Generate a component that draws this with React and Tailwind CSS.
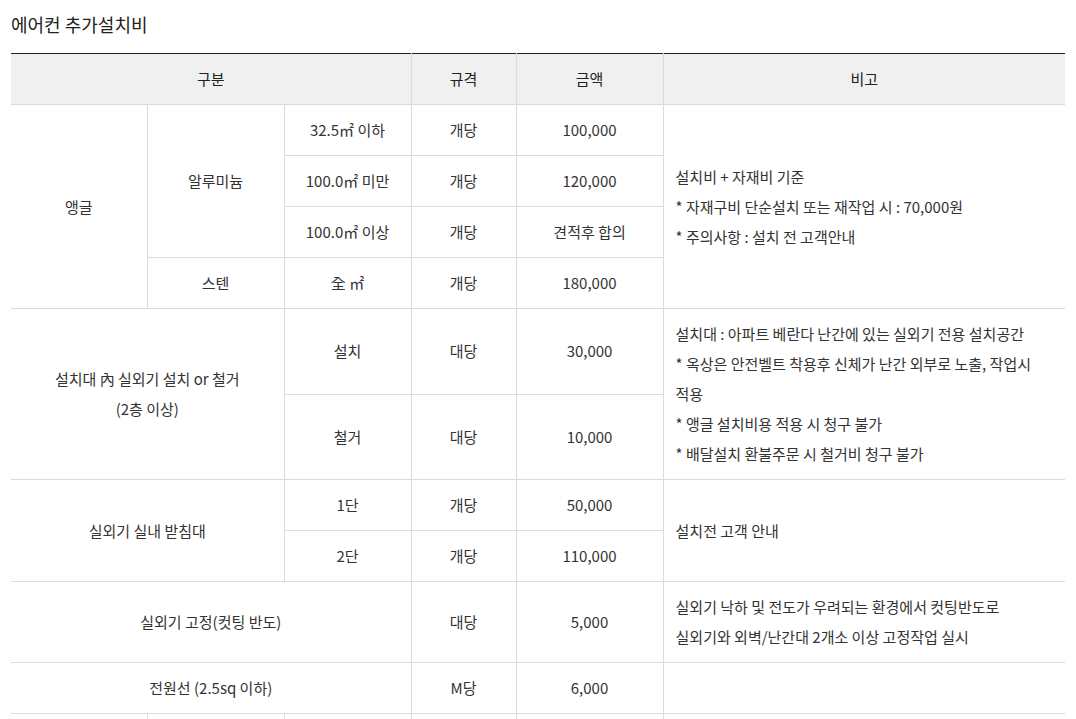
const cell = "border border-[#dcdcdc] px-3 py-[10px] text-center align-middle";
const head = "border border-[#dcdcdc] border-t-[#222] px-3 py-[10px] text-center align-middle font-normal text-[#222]";
const note = "border border-[#dcdcdc] px-3 py-[10px] text-left align-middle";

const App = () => {
  return (
    <div
      className="bg-white min-h-screen px-[11px] pt-[9px] text-[#333]"
      style={{ fontFamily: '"Noto Sans CJK KR", "Noto Sans", sans-serif' }}
    >
      <h2 className="text-[18px] leading-[30px] text-[#222] mb-[14px]">에어컨 추가설치비</h2>

      <table className="w-[1054px] border-collapse table-fixed text-[15px] leading-[30px] border-x-0 [&_td:first-child]:border-l-0 [&_th:first-child]:border-l-0 [&_td:last-child]:border-r-0 [&_th:last-child]:border-r-0">
        <colgroup>
          <col className="w-[136px]" />
          <col className="w-[137px]" />
          <col className="w-[127px]" />
          <col className="w-[105px]" />
          <col className="w-[147px]" />
          <col />
        </colgroup>
        <thead>
          <tr className="bg-[#f0f0f0]">
            <th colSpan={3} className={head}>구분</th>
            <th className={head}>규격</th>
            <th className={head}>금액</th>
            <th className={head}>비고</th>
          </tr>
        </thead>
        <tbody>
          <tr>
            <td rowSpan={4} className={cell}>앵글</td>
            <td rowSpan={3} className={cell}>알루미늄</td>
            <td className={cell}>32.5㎡ 이하</td>
            <td className={cell}>개당</td>
            <td className={cell}>100,000</td>
            <td rowSpan={4} className={note}>
              설치비 + 자재비 기준
              <br />* 자재구비 단순설치 또는 재작업 시 : 70,000원
              <br />* 주의사항 : 설치 전 고객안내
            </td>
          </tr>
          <tr>
            <td className={cell}>100.0㎡ 미만</td>
            <td className={cell}>개당</td>
            <td className={cell}>120,000</td>
          </tr>
          <tr>
            <td className={cell}>100.0㎡ 이상</td>
            <td className={cell}>개당</td>
            <td className={cell}>견적후 합의</td>
          </tr>
          <tr>
            <td className={`${cell} !border-l`}>스텐</td>
            <td className={cell}>全 ㎡</td>
            <td className={cell}>개당</td>
            <td className={cell}>180,000</td>
          </tr>

          <tr>
            <td colSpan={2} rowSpan={2} className={cell}>
              설치대 內 실외기 설치 or 철거
              <br />(2층 이상)
            </td>
            <td className={cell}>설치</td>
            <td className={cell}>대당</td>
            <td className={cell}>30,000</td>
            <td rowSpan={2} className={note}>
              설치대 : 아파트 베란다 난간에 있는 실외기 전용 설치공간
              <br />* 옥상은 안전벨트 착용후 신체가 난간 외부로 노출, 작업시
              <br />적용
              <br />* 앵글 설치비용 적용 시 청구 불가
              <br />* 배달설치 환불주문 시 철거비 청구 불가
            </td>
          </tr>
          <tr>
            <td className={`${cell} !border-l`}>철거</td>
            <td className={cell}>대당</td>
            <td className={cell}>10,000</td>
          </tr>

          <tr>
            <td colSpan={2} rowSpan={2} className={cell}>실외기 실내 받침대</td>
            <td className={cell}>1단</td>
            <td className={cell}>개당</td>
            <td className={cell}>50,000</td>
            <td rowSpan={2} className={note}>설치전 고객 안내</td>
          </tr>
          <tr>
            <td className={`${cell} !border-l`}>2단</td>
            <td className={cell}>개당</td>
            <td className={cell}>110,000</td>
          </tr>

          <tr>
            <td colSpan={3} className={cell}>실외기 고정(컷팅 반도)</td>
            <td className={cell}>대당</td>
            <td className={cell}>5,000</td>
            <td className={note}>
              실외기 낙하 및 전도가 우려되는 환경에서 컷팅반도로
              <br />실외기와 외벽/난간대 2개소 이상 고정작업 실시
            </td>
          </tr>
          <tr>
            <td colSpan={3} className={cell}>전원선 (2.5sq 이하)</td>
            <td className={cell}>M당</td>
            <td className={cell}>6,000</td>
            <td className={note}></td>
          </tr>
          <tr>
            <td className={cell}>&nbsp;</td>
            <td className={cell}>&nbsp;</td>
            <td className={cell}>&nbsp;</td>
            <td className={cell}>&nbsp;</td>
            <td className={cell}>&nbsp;</td>
            <td className={note}>&nbsp;</td>
          </tr>
        </tbody>
      </table>
    </div>
  );
};

export default App;
